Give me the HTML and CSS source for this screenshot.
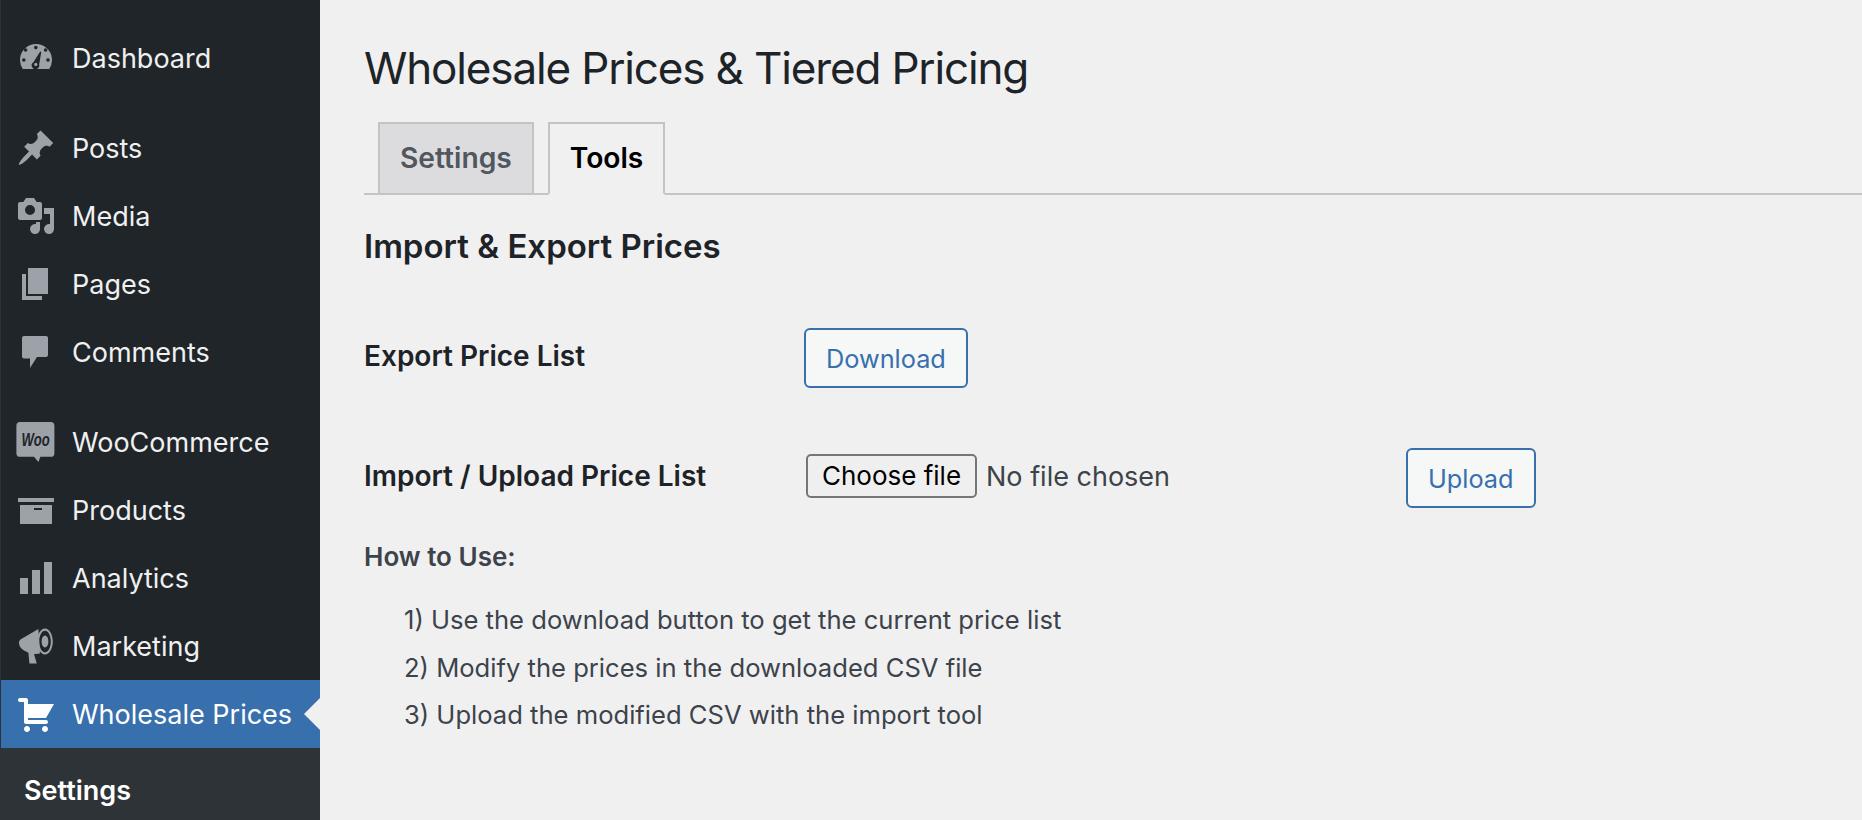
FILE: index.html
```html
<!DOCTYPE html>
<html lang="en">
<head>
    <meta charset="UTF-8">
    <title>Wholesale Prices &amp; Tiered Pricing</title>
    <link rel="stylesheet" href="styles.css">
</head>
<body>
    <div class="sidebar">
        <ul class="menu">
            <li class="menu-item">
                <svg class="menu-icon" viewBox="0 0 20 20"><path d="M3.400 15.500A8 8 0 1 1 16.600 15.500z"/><g class="icon-cut"><circle cx="4.800" cy="6" r=".9"/><circle cx="9.900" cy="4.800" r=".9"/><circle cx="14.800" cy="6" r=".9"/><circle cx="3.900" cy="11" r=".9"/><circle cx="16" cy="11" r=".9"/><path d="M12.100 6.800l.5.200-1 6.300a1.900 1.900 0 1 1-2.900-1.200z"/></g><circle cx="9.900" cy="13.200" r=".8"/></svg>
                <span>Dashboard</span>
            </li>
            <li class="menu-item group-start">
                <svg class="menu-icon" viewBox="0 0 20 20"><path d="M10.440 3.020l1.820-1.820 6.360 6.350-1.830 1.820c-1.050-.68-2.480-.57-3.410.36l-.75.75c-.92.93-1.040 2.350-.35 3.410l-1.830 1.820-2.410-2.410-2.800 2.790c-.42.42-3.380 2.710-3.800 2.290s1.860-3.390 2.280-3.810l2.790-2.790L4.100 9.360l1.830-1.820c1.050.69 2.480.57 3.400-.36l.75-.75c.93-.92 1.050-2.350.36-3.410z"/></svg>
                <span>Posts</span>
            </li>
            <li class="menu-item">
                <svg class="menu-icon" viewBox="0 0 20 20"><path fill-rule="evenodd" d="M13 11V4c0-.55-.45-1-1-1h-1.670L9 1H5L3.670 3H2c-.55 0-1 .45-1 1v7c0 .55.45 1 1 1h10c.55 0 1-.45 1-1zM7 4.500a2.500 2.500 0 1 1 0 5 2.500 2.500 0 0 1 0-5z"/><path d="M14 6h5v10.500a2.500 2.500 0 1 1-2-2.450V9h-3zM10 14.050V13h2v3.500a2.500 2.500 0 1 1-2-2.450z"/></svg>
                <span>Media</span>
            </li>
            <li class="menu-item">
                <svg class="menu-icon" viewBox="0 0 20 20"><path d="M6 2h10v13H6z"/><path d="M3 5h2v11h8v2H3z"/></svg>
                <span>Pages</span>
            </li>
            <li class="menu-item">
                <svg class="menu-icon" viewBox="0 0 20 20"><path d="M4 2h11c.6 0 1 .4 1 1v8.500c0 .6-.4 1-1 1h-4.500L7 18v-4.800H4c-.6 0-1-.4-1-1V3c0-.6.4-1 1-1z"/></svg>
                <span>Comments</span>
            </li>
            <li class="menu-item group-start">
                <svg class="menu-icon" viewBox="0 0 20 20"><path d="M1.900 0h15.600c1 0 1.700.7 1.700 1.700v14c0 1-.7 1.700-1.700 1.700h-5.300l-1 2.600-2.200-2.600H1.900c-1 0-1.700-.7-1.700-1.700v-14C.2.700.9 0 1.900 0z"/><text class="woo-text" transform="translate(2.800 12) scale(.69 1)">Woo</text></svg>
                <span>WooCommerce</span>
            </li>
            <li class="menu-item">
                <svg class="menu-icon" viewBox="0 0 20 20"><path fill-rule="evenodd" d="M1 4h18v2H1zM2 7.500h16V17H2zM9 9v1h4V9z"/></svg>
                <span>Products</span>
            </li>
            <li class="menu-item">
                <svg class="menu-icon" viewBox="0 0 20 20"><path d="M2 10h4v8H2zM8 6h4v12H8zM14 2h4v16h-4z"/></svg>
                <span>Analytics</span>
            </li>
            <li class="menu-item">
                <svg class="menu-icon" viewBox="0 0 20 20"><path d="M11.200 1.500L2.600 6.500C1.800 7 1.500 7.700 1.500 8.500c0 1.600 1 3 2.500 3.700l2.200 1.200.5 5.400h3.700L9 14.100l3-.3z"/><path fill-rule="evenodd" d="M14.500 1.300c2.100 0 3.900 2.900 3.900 6.500s-1.800 6.500-3.900 6.500-3.900-2.900-3.900-6.500 1.800-6.500 3.900-6.500zm0 1.100c-1.600 0-2.900 2.400-2.900 5.400s1.300 5.400 2.900 5.400 2.900-2.400 2.900-5.400-1.300-5.400-2.900-5.400z"/><ellipse cx="14.500" cy="7.800" rx="1.700" ry="3"/></svg>
                <span>Marketing</span>
            </li>
            <li class="menu-item active">
                <svg class="menu-icon" viewBox="0 0 20 20"><path d="M6 13h9c.55 0 1 .45 1 1s-.45 1-1 1H5c-.55 0-1-.45-1-1V4H2c-.55 0-1-.45-1-1s.45-1 1-1h3c.55 0 1 .45 1 1v2h13l-4 7H6v1zm-.5 3c.83 0 1.500.67 1.500 1.500S6.330 19 5.500 19 4 18.330 4 17.500 4.670 16 5.500 16zm9 0c.83 0 1.500.67 1.500 1.500s-.67 1.500-1.500 1.500-1.500-.67-1.500-1.500.67-1.500 1.500-1.500z"/></svg>
                <span>Wholesale Prices</span>
            </li>
        </ul>
        <div class="submenu">Settings</div>
    </div>

    <div class="content">
        <h1>Wholesale Prices &amp; Tiered Pricing</h1>

        <div class="tabs">
            <a class="tab">Settings</a>
            <a class="tab tab-active">Tools</a>
        </div>

        <h2>Import &amp; Export Prices</h2>

        <div class="form-row export-row">
            <label class="form-label">Export Price List</label>
            <button class="btn">Download</button>
        </div>

        <div class="form-row import-row">
            <label class="form-label" for="priceFile">Import / Upload Price List</label>
            <div class="file-field">
                <label class="file-btn">Choose file<input type="file" id="priceFile"></label>
                <span class="file-name">No file chosen</span>
            </div>
            <button class="btn">Upload</button>
        </div>

        <p class="how-title">How to Use:</p>
        <ol class="how-list">
            <li>1) Use the download button to get the current price list</li>
            <li>2) Modify the prices in the downloaded CSV file</li>
            <li>3) Upload the modified CSV with the import tool</li>
        </ol>
    </div>
</body>
</html>
```

FILE: styles.css
```css
* {
    box-sizing: border-box;
}
body {
    margin: 0;
    display: flex;
    height: 820px;
    overflow: hidden;
    font-family: 'Inter', 'Liberation Sans', sans-serif;
    font-size: 26px;
    background-color: #f0f0f1;
    color: #3c434a;
}

/* left menu */
.sidebar {
    width: 320px;
    flex-shrink: 0;
    background-color: #1f2529;
    border-left: 1px solid #2c3338;
    overflow: hidden;
}
.menu {
    list-style: none;
    margin: 0;
    padding: 24px 0 0;
}
.menu-item {
    position: relative;
    display: flex;
    align-items: center;
    gap: 16px;
    height: 68px;
    padding-left: 15px;
    font-size: 27px;
    color: #f0f0f1;
}
.group-start {
    margin-top: 22px;
}
.menu-icon {
    width: 40px;
    height: 40px;
    flex-shrink: 0;
    fill: #9ca2a7;
}
.icon-cut {
    fill: #1f2529;
}
.woo-text {
    font-family: 'Liberation Sans', sans-serif;
    font-size: 9.500px;
    font-weight: 700;
    font-style: italic;
    fill: #1f2529;
}
.menu-item.active {
    background-color: #3770ad;
    color: #fff;
}
.menu-item.active .menu-icon {
    fill: #fff;
}
.menu-item.active::after {
    content: '';
    position: absolute;
    right: 0;
    top: 50%;
    margin-top: -16px;
    border: 16px solid transparent;
    border-right-color: #f0f0f1;
    border-left-width: 0;
}
.submenu {
    background-color: #2e3338;
    height: 72px;
    padding: 28px 0 0 23px;
    color: #fff;
    font-weight: 600;
    font-size: 27px;
    line-height: 30px;
}

/* main area */
.content {
    flex: 1;
    padding: 40px 0 0 44px;
}
h1 {
    margin: 0;
    font-size: 44px;
    font-weight: 400;
    letter-spacing: -1.150px;
    line-height: 56px;
    color: #1d2327;
}
.tabs {
    display: flex;
    gap: 14px;
    height: 73px;
    margin-top: 26px;
    padding-left: 14px;
    border-bottom: 2px solid #c3c4c7;
}
.tab {
    height: 73px;
    padding: 0 20px;
    line-height: 68px;
    font-size: 28.200px;
    font-weight: 600;
    color: #50575e;
    background-color: #dcdcde;
    border: 2px solid #c3c4c7;
}
.tab-active {
    color: #000;
    background-color: #f0f0f1;
    border-bottom-color: #f0f0f1;
}
h2 {
    margin: 31px 0 0;
    font-size: 33px;
    font-weight: 600;
    line-height: 40px;
    color: #1d2327;
}
.form-row {
    display: flex;
    align-items: center;
}
.export-row {
    margin-top: 58px;
}
.import-row {
    margin-top: 56px;
}
.form-label {
    width: 440px;
    flex-shrink: 0;
    font-size: 28px;
    font-weight: 600;
    color: #1d2327;
}
.btn {
    height: 60px;
    margin-top: 4px;
    padding: 0 20px;
    font-family: inherit;
    font-size: 25.300px;
    color: #3770ad;
    background-color: #f6f7f7;
    border: 2px solid #3770ad;
    border-radius: 6px;
}
.file-field {
    display: flex;
    align-items: center;
    gap: 9px;
    width: 600px;
    margin-left: 2px;
}
.file-btn {
    display: block;
    width: 171px;
    height: 44px;
    line-height: 40px;
    text-align: center;
    font-size: 26px;
    color: #000;
    background-color: #efefef;
    border: 2px solid #767676;
    border-radius: 5px;
}
.file-btn input {
    display: none;
}
.file-name {
    font-size: 27px;
}
.how-title {
    margin: 34px 0 0;
    font-size: 26px;
    font-weight: 600;
    line-height: 30px;
}
.how-list {
    list-style: none;
    margin: 24px 0 0;
    padding: 0 0 0 40px;
    font-size: 25.600px;
}
.how-list li {
    height: 47.500px;
    line-height: 47.500px;
}
```
